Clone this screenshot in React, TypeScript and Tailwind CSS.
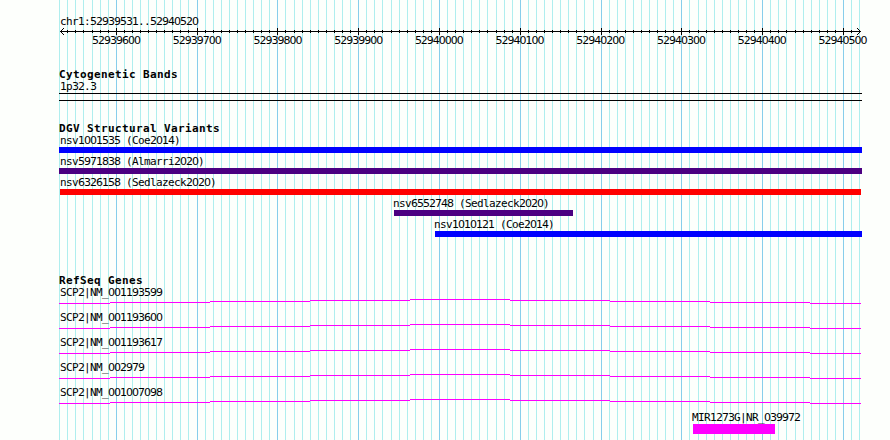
import React from "react";

const START = 52939531;
const toX = (bp: number) => Math.round(60 + ((bp - START) * 800) / 990);
const minors = Array.from({ length: 100 }, (_, i) => 52939530 + i * 10);
const majors = minors.filter((bp) => bp % 100 === 0);

/* Digits take the proportional face so that zeros carry no inner dot. */
function Mono({ text }: { text: string }) {
  return (
    <span className="relative -top-0.5 whitespace-pre font-['DejaVu_Sans_Mono',monospace] text-[11px] tracking-[-0.623px]">
      {text.split(/(\d+)/).map((run, i) =>
        /^\d/.test(run) ? (
          <span key={i} className="font-['DejaVu_Sans',sans-serif] tracking-[-1px]">{run}</span>
        ) : (
          run
        ),
      )}
    </span>
  );
}

function Title({ children }: { children: string }) {
  return (
    <h2 className="h-3 whitespace-pre pl-[59px] font-['DejaVu_Sans_Mono',monospace] text-[11px] font-bold leading-[14px] tracking-[0.377px]">
      {children}
    </h2>
  );
}

function GridLines() {
  return (
    <svg className="absolute inset-0" width="890" height="440" shapeRendering="crispEdges">
      {minors.map((bp) => (
        <rect key={bp} x={toX(bp)} y="0" width="1" height="440" fill={bp % 100 === 0 ? "#87ceeb" : "#afeeee"} />
      ))}
    </svg>
  );
}

function Ruler() {
  return (
    <svg className="block" width="890" height="10" shapeRendering="crispEdges">
      <rect x="60" y="4" width="801" height="1" />
      {minors.slice(1, -1).map((bp) =>
        bp % 100 === 0 ? (
          <rect key={bp} x={toX(bp)} y="1" width="1" height="7" />
        ) : (
          <rect key={bp} x={toX(bp)} y="3" width="1" height="3" />
        ),
      )}
      <path d="M61 3h1v1h-1zM62 2h1v1h-1zM63 1h1v1h-1zM61 5h1v1h-1zM62 6h1v1h-1zM63 7h1v1h-1z" />
      <path d="M859 3h1v1h-1zM858 2h1v1h-1zM857 1h1v1h-1zM859 5h1v1h-1zM858 6h1v1h-1zM857 7h1v1h-1z" />
    </svg>
  );
}

const variants = [
  { name: "nsv1001535 (Coe2014)", label: "pl-[60px]", bar: "ml-[59px] w-[803px] bg-[#0000ff]" },
  { name: "nsv5971838 (Almarri2020)", label: "pl-[60px]", bar: "ml-[59px] w-[803px] bg-[#4b0082]" },
  { name: "nsv6326158 (Sedlazeck2020)", label: "pl-[60px]", bar: "ml-[60px] w-[801px] bg-[#ff0000]" },
  { name: "nsv6552748 (Sedlazeck2020)", label: "pl-[393px]", bar: "ml-[394px] w-[179px] bg-[#4b0082]" },
  { name: "nsv1010121 (Coe2014)", label: "pl-[434px]", bar: "ml-[435px] w-[427px] bg-[#0000ff]" },
];

const genes = ["SCP2|NM_001193599", "SCP2|NM_001193600", "SCP2|NM_001193617", "SCP2|NM_002979", "SCP2|NM_001007098"];

function Intron() {
  return (
    <svg className="block" width="890" height="5" fill="#ff00ff" shapeRendering="crispEdges">
      <path d="M59 4h51v1h-51zM110 3h100v1h-100zM210 2h100v1h-100zM310 1h100v1h-100zM410 0h100v1h-100zM510 1h100v1h-100zM610 2h100v1h-100zM710 3h100v1h-100zM810 4h51v1h-51z" />
    </svg>
  );
}

export default function App() {
  return (
    <main className="relative h-[440px] w-[890px] overflow-hidden bg-[#fdfffc] text-black">
      <GridLines />
      <div className="relative pt-[15px]">
        <div className="h-3 pl-[60px] leading-3"><Mono text="chr1:52939531..52940520" /></div>
        <Ruler />
        <div className="-mt-[3px] flex h-3 pl-[92px] leading-3">
          {majors.map((bp) => (
            <div key={bp} className="w-[80.72px] shrink-0">
              <Mono text={String(bp)} />
            </div>
          ))}
        </div>

        <section className="mt-[22px]">
          <Title>Cytogenetic Bands</Title>
          <div className="h-[13px] pl-[60px] leading-[13px]"><Mono text="1p32.3" /></div>
          <div className="ml-[59px] h-2 w-[803px] border-y border-black" />
        </section>

        <section className="mt-[21px]">
          <Title>DGV Structural Variants</Title>
          {variants.map((v) => (
            <div key={v.name} className="h-[21px]">
              <div className={`h-[13px] leading-[13px] ${v.label}`}><Mono text={v.name} /></div>
              <div className={`h-1.5 ${v.bar}`} />
            </div>
          ))}
        </section>

        <section className="mt-[35px]">
          <Title>RefSeq Genes</Title>
          {genes.map((g) => (
            <div key={g} className="h-[25px]">
              <div className="h-[13px] pl-[60px] leading-[13px]"><Mono text={g} /></div>
              <Intron />
            </div>
          ))}
          <div className="h-[13px] pl-[692px] leading-[13px]"><Mono text="MIR1273G|NR_039972" /></div>
          <div className="ml-[693px] h-2.5 w-[82px] bg-[#ff00ff]" />
        </section>
      </div>
    </main>
  );
}
